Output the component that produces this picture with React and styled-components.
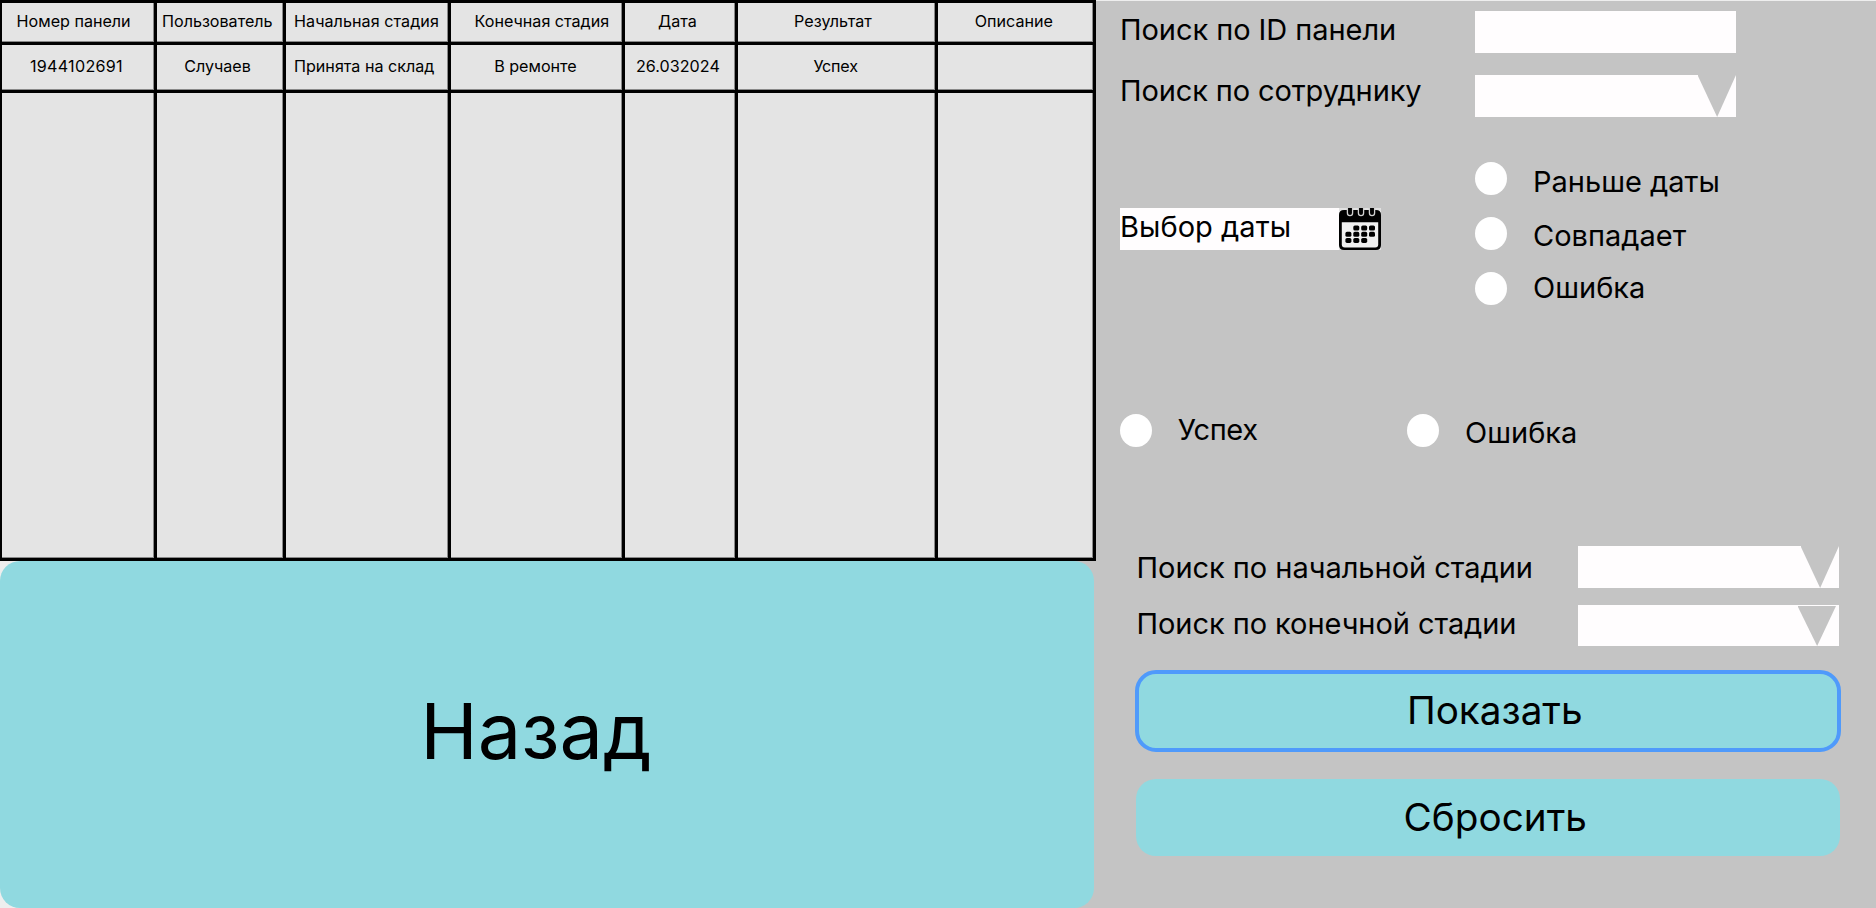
import React from "react";
import styled, { createGlobalStyle } from "styled-components";

const GlobalStyle = createGlobalStyle`
  *, *::before, *::after { box-sizing: border-box; }
  html, body { margin: 0; padding: 0; }
  body { background: #eeeeee; overflow: hidden; }
`;

const Page = styled.main`
  display: grid;
  grid-template-columns: 1094px 782px;
  width: 1876px;
  height: 908px;
  color: #000;
  font-family: Inter, "Liberation Sans", sans-serif;
  font-size: 29px;
  line-height: 30px;
  white-space: nowrap;
`;

const Left = styled.section`
  display: flex;
  flex-direction: column;
  position: relative;
  z-index: 1;
`;

const Table = styled.div`
  display: grid;
  grid-template-columns: 157px 129px 165px 174px 113px 200px 158px;
  grid-template-rows: 42px 48px 468px;
  width: 1096px;
  height: 561px;
  border-top: 3px solid #000;
  font-size: 16.13px;
  line-height: 20px;
`;

const Cell = styled.div`
  padding: ${(p) => p.$top || 0}px 0 0 ${(p) => p.$left || 0}px;
  border-right: 3px solid #000;
  border-bottom: 3px solid #000;
  background: #e4e4e4;
  box-shadow: inset -1px -1px 0 rgba(0, 0, 0, 0.4);
  letter-spacing: ${(p) => p.$track || 0}px;

  &:nth-child(7n + 1) {
    border-left: 2px solid #000;
  }
`;

const BackButton = styled.button`
  flex: 1;
  width: 1094px;
  padding: 0 22px 7px 0;
  border: 0;
  border-radius: 20px;
  background: #90d9e0;
  color: #000;
  font: 400 77.4px/94px Inter, "Liberation Sans", sans-serif;
`;

const LeftFooter = styled.div`
  display: flex;
  flex: 1;
  background: linear-gradient(to right, #eeeeee 50%, #c4c4c4 50%);
`;

const Panel = styled.aside`
  display: flex;
  flex-direction: column;
  margin-top: 1px;
  padding-top: 10px;
  background: #c4c4c4;
`;

const Fields = styled.div`
  display: flex;
  flex-direction: column;
  gap: ${(p) => p.$gap}px;
  margin: ${(p) => p.$top || 0}px 0 0 ${(p) => p.$left}px;
`;

const Field = styled.div`
  display: grid;
  grid-template-columns: ${(p) => p.$label}px 261px;
  height: ${(p) => p.$height || 42}px;
`;

const Label = styled.span`
  padding-top: ${(p) => p.$top || 0}px;
  letter-spacing: ${(p) => p.$track || 0}px;
`;

const Input = styled.div`
  display: flex;
  justify-content: flex-end;
  height: 100%;
  background: #fffdfe;
`;

const Arrow = styled.i`
  width: 38.5px;
  height: ${(p) => (p.$inset ? "calc(100% - 1px)" : "100%")};
  margin: ${(p) => (p.$inset ? "1px 3px 0 0" : "0")};
  background: #c4c4c4;
  clip-path: polygon(0 0, 100% 0, 51% 100%);
`;

const DateSection = styled.div`
  display: flex;
  margin: 45px 0 0 26px;
`;

const DatePicker = styled.div`
  display: flex;
  justify-content: space-between;
  width: 261px;
  height: 42px;
  margin: 46px 94px 0 0;
  background: #fffdfe;
`;

const DateText = styled.span`
  padding-top: 4px;
  letter-spacing: 0.05px;
`;

const RadioGroup = styled.div`
  display: flex;
  flex-direction: column;
  gap: 22px;
`;

const Radio = styled.div`
  display: flex;
  gap: ${(p) => p.$gap || 26}px;
  height: 33px;
`;

const Dot = styled.i`
  width: 32px;
  height: 33px;
  border-radius: 50%;
  background: #fff;
`;

const ResultRow = styled.div`
  display: grid;
  grid-template-columns: 287px auto;
  margin: 109px 0 0 26px;
`;

const Actions = styled.div`
  display: flex;
  flex-direction: column;
  gap: 27px;
  margin: 24px 35px 0 40.5px;
`;

const ActionButton = styled.button`
  height: ${(p) => (p.$active ? 82 : 77)}px;
  margin: ${(p) => (p.$active ? "0" : "0 1.5px")};
  padding: 0 0 1.5px ${(p) => (p.$active ? 14 : 15)}px;
  border: ${(p) => (p.$active ? "4px solid #4f9afb" : "0")};
  border-radius: ${(p) => (p.$active ? 21 : 20)}px;
  background: #90d9e0;
  color: #000;
  font: 400 38.7px/48px Inter, "Liberation Sans", sans-serif;
`;

const DAYS = [
  [17.3, 20], [25.2, 20], [33, 20],
  [9.4, 26.3], [17.3, 26.3], [25.2, 26.3], [33, 26.3],
  [9.4, 32.4], [17.3, 32.4], [25.2, 32.4],
];

function CalendarIcon() {
  return (
    <svg width="42" height="42" viewBox="0 0 42 42">
      <rect width="42" height="42" fill="#e2e2e2" />
      <path d="M0 7Q0 2 5 2H37Q42 2 42 7V37Q42 42 37 42H5Q0 42 0 37Z" fill="#000" />
      <path d="M2.8 14.2H39.2V36.5Q39.2 39.5 36.2 39.5H5.8Q2.8 39.5 2.8 36.5Z" fill="#f0f0f0" />
      {[11, 22, 33].map((x) => (
        <path
          key={x}
          d={`M${x - 2.6} 0V5Q${x - 2.6} 7.6 ${x} 7.6Q${x + 2.6} 7.6 ${x + 2.6} 5V0`}
          fill="#000"
          stroke="#d0d0d0"
          strokeWidth="1.3"
        />
      ))}
      {DAYS.map(([x, y]) => (
        <rect key={`${x}-${y}`} x={x - 3} y={y - 2.5} width="6" height="5" rx="1.6" fill="#000" />
      ))}
    </svg>
  );
}

const HEADERS = [
  ["Номер панели", 14.6],
  ["Пользователь", 5],
  ["Начальная стадия", 8, 0.06],
  ["Конечная стадия", 23.6],
  ["Дата", 33.1],
  ["Результат", 56.1],
  ["Описание", 36.8],
];

const RECORD = [
  ["1944102691", 28, 0.27],
  ["Случаев", 27.2],
  ["Принята на склад", 8],
  ["В ремонте", 43.2],
  ["26.032024", 11, 0.03],
  ["Успех", 75.4, -0.2],
  ["", 0],
];

export default function App() {
  return (
    <>
      <GlobalStyle />
      <Page>
        <Left>
          <Table>
            {HEADERS.map(([text, left, track]) => (
              <Cell key={text} $top={8} $left={left} $track={track}>{text}</Cell>
            ))}
            {RECORD.map(([text, left, track], i) => (
              <Cell key={i} $top={11} $left={left} $track={track}>{text}</Cell>
            ))}
            {HEADERS.map(([text]) => <Cell key={`empty-${text}`} />)}
          </Table>
          <LeftFooter>
            <BackButton>Назад</BackButton>
          </LeftFooter>
        </Left>

        <Panel>
          <Fields $gap={22} $left={26}>
            <Field $label={355}>
              <Label $top={3.5} $track={-0.06}>Поиск по ID панели</Label>
              <Input />
            </Field>
            <Field $label={355}>
              <Label $top={0.5} $track={-0.12}>Поиск по сотруднику</Label>
              <Input><Arrow /></Input>
            </Field>
          </Fields>

          <DateSection>
            <DatePicker>
              <DateText>Выбор даты</DateText>
              <CalendarIcon />
            </DatePicker>
            <RadioGroup>
              <Radio><Dot /><Label $top={5}>Раньше даты</Label></Radio>
              <Radio><Dot /><Label $top={4}>Совпадает</Label></Radio>
              <Radio><Dot /><Label $top={1}>Ошибка</Label></Radio>
            </RadioGroup>
          </DateSection>

          <ResultRow>
            <Radio $gap={25.8}><Dot /><Label $top={0.5} $track={-0.35}>Успех</Label></Radio>
            <Radio $gap={26}><Dot /><Label $top={4}>Ошибка</Label></Radio>
          </ResultRow>

          <Fields $gap={17} $top={99} $left={42.5}>
            <Field $label={441.5}>
              <Label $top={7} $track={-0.03}>Поиск по начальной стадии</Label>
              <Input><Arrow /></Input>
            </Field>
            <Field $label={441.5} $height={41}>
              <Label $top={4} $track={-0.06}>Поиск по конечной стадии</Label>
              <Input><Arrow $inset /></Input>
            </Field>
          </Fields>

          <Actions>
            <ActionButton $active>Показать</ActionButton>
            <ActionButton>Сбросить</ActionButton>
          </Actions>
        </Panel>
      </Page>
    </>
  );
}
